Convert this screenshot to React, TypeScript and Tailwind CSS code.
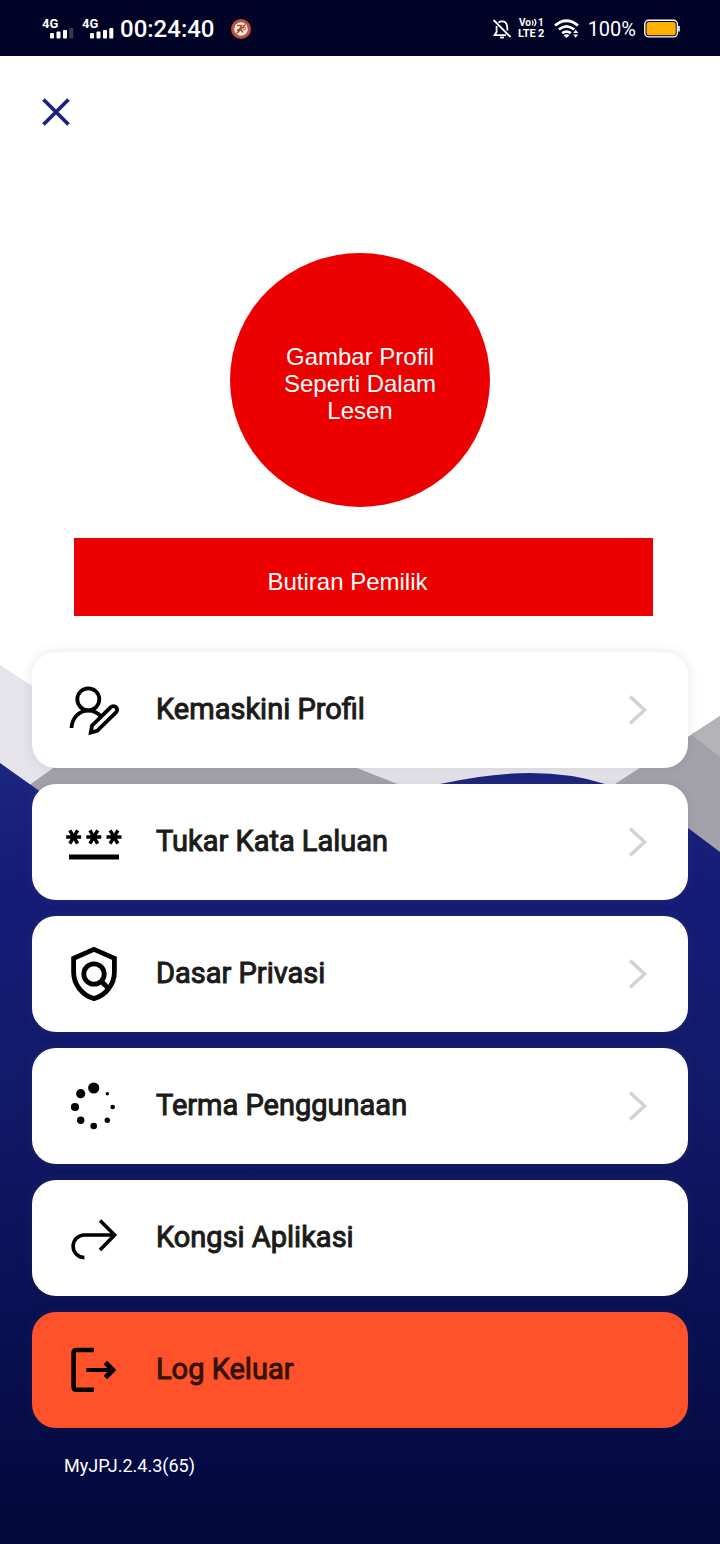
import React from 'react';

interface MenuItem {
  label: string;
  icon: React.ReactNode;
  chevron?: boolean;
  danger?: boolean;
}

const iconClass = 'w-14 h-14 shrink-0';

const ProfileIcon = () => (
  <svg viewBox="0 0 56 56" className={iconClass} fill="none" stroke="currentColor" strokeWidth="3.8" aria-hidden="true">
    <circle cx="22.3" cy="17.3" r="11" />
    <path d="M5.5 46C6 36 13 28.6 22.3 28.6C28 28.6 32 30.8 35.5 35" />
    <path d="M24.8 50.6L26 43.6L44.8 25.2A3.6 3.6 0 0 1 50 30.4L31.2 48.8Z" strokeLinejoin="miter" />
  </svg>
);

const PasswordIcon = () => (
  <svg viewBox="0 0 56 56" className={iconClass} fill="none" stroke="currentColor" strokeWidth="3.5" aria-hidden="true">
    {[7.7, 27.8, 48].map((x) => (
      <g key={x} transform={`translate(${x} 23)`}>
        <path d="M-7.5 0H7.5M-3.9 -6.6L3.9 6.6M3.9 -6.6L-3.9 6.6" />
      </g>
    ))}
    <path d="M3 43H53" strokeWidth="5" />
  </svg>
);

const PrivacyIcon = () => (
  <svg viewBox="0 0 56 56" className={iconClass} fill="none" stroke="currentColor" strokeWidth="4.8" aria-hidden="true">
    <path d="M28 3.4L48.4 12.3V26C48.4 38.4 39.8 49.4 28 52.6C16.2 49.4 7.6 38.4 7.6 26V12.3Z" />
    <circle cx="28" cy="28" r="10.2" />
    <path d="M34.5 34.5L43 43" />
  </svg>
);

const dots = [
  [27.7, 10, 5.6],
  [14.7, 15.7, 4.6],
  [9, 29, 4.1],
  [14.7, 42.3, 3.7],
  [27.7, 48, 3.3],
  [41.3, 42.3, 2.7],
  [46.7, 29, 2.3],
  [41.3, 15.7, 1.7],
];

const TermsIcon = () => (
  <svg viewBox="0 0 56 56" className={iconClass} fill="currentColor" aria-hidden="true">
    {dots.map(([cx, cy, r]) => (
      <circle key={`${cx}-${cy}`} cx={cx} cy={cy} r={r} />
    ))}
  </svg>
);

const ShareIcon = () => (
  <svg viewBox="0 0 56 56" className={iconClass} fill="none" stroke="currentColor" strokeWidth="3.6" aria-hidden="true">
    <path d="M18.4 47.6A11.3 11.3 0 0 1 18.4 25H48" />
    <path d="M34 10.5L48.6 25L34 40" />
  </svg>
);

const LogoutIcon = () => (
  <svg viewBox="0 0 56 56" className={iconClass} fill="none" stroke="currentColor" strokeWidth="4.6" aria-hidden="true">
    <path d="M28 8H10.5Q7.6 8 7.6 11V44.7Q7.6 47.7 10.5 47.7H28" />
    <path d="M20.3 28H46" strokeWidth="4" />
    <path d="M39.4 20.6L46.8 28L39.4 35.4" strokeWidth="5" />
  </svg>
);

const menuItems: MenuItem[] = [
  { label: 'Kemaskini Profil', icon: <ProfileIcon />, chevron: true },
  { label: 'Tukar Kata Laluan', icon: <PasswordIcon />, chevron: true },
  { label: 'Dasar Privasi', icon: <PrivacyIcon />, chevron: true },
  { label: 'Terma Penggunaan', icon: <TermsIcon />, chevron: true },
  { label: 'Kongsi Aplikasi', icon: <ShareIcon /> },
  { label: 'Log Keluar', icon: <LogoutIcon />, danger: true },
];

const Signal: React.FC<{ weak?: boolean }> = ({ weak }) => (
  <svg viewBox="0 0 32 24" className="w-8 h-6" fill="currentColor" aria-hidden="true">
    <text x="0" y="11" fontSize="13" fontWeight="700">4G</text>
    <rect x="8" y="16" width="4" height="5.5" rx="1" />
    <rect x="14.5" y="14.5" width="4" height="7" rx="1" />
    <rect x="21" y="13" width="4" height="8.5" rx="1" />
    <rect x="27.3" y="11" width="4" height="10.5" rx="1" opacity={weak ? 0.22 : 1} />
  </svg>
);

const StatusBar = () => (
  <header className="flex h-14 items-center justify-between bg-[#000226] pl-[42px] pr-10 pt-0.5 text-white">
    <div className="flex items-center">
      <Signal weak />
      <span className="w-2" />
      <Signal />
      <time className="ml-1.5 text-2xl font-medium">00:24:40</time>
      <svg viewBox="0 0 20 20" className="ml-4 h-5 w-5" fill="none" aria-hidden="true">
        <circle cx="10" cy="10" r="10" fill="#bd4f40" />
        <circle cx="10" cy="10" r="6.8" fill="#fff0de" />
        <path d="M5.5 14.5L14.5 5.5M6 6.5H10.5L9 9.5L12 13.5M6 11.5L9 10" stroke="#a64a35" strokeWidth="1.5" />
        <circle cx="13.4" cy="9.6" r="1.4" stroke="#a64a35" />
      </svg>
    </div>
    <div className="flex items-center">
      <svg viewBox="0 0 20 20" className="h-5 w-5" fill="none" stroke="currentColor" strokeWidth="1.8" aria-hidden="true">
        <path d="M1.5 1L18.5 18" />
        <path d="M6.5 3.6C8 2 12 2 13.6 3.6C15.2 5.2 15.4 7 15.4 11.5" />
        <path d="M4.6 7V13L2.6 16.2H14" />
        <path d="M8 18.5H12" />
      </svg>
      <svg viewBox="0 0 28 28" className="ml-1.5 h-7 w-7" fill="currentColor" aria-hidden="true">
        <text x="1" y="11" fontSize="10" fontWeight="700">Vo</text>
        <path d="M14 5.5Q16 7.5 14 10.5M16.3 4Q19.4 7.5 16.3 11" fill="none" stroke="currentColor" strokeWidth="1.3" />
        <text x="20" y="11" fontSize="10" fontWeight="700">1</text>
        <text x="0" y="22" fontSize="11" fontWeight="700">LTE</text>
        <text x="20" y="22" fontSize="11" fontWeight="700">2</text>
      </svg>
      <svg viewBox="0 0 26 20" className="ml-2 h-5 w-[26px]" fill="none" stroke="currentColor" strokeWidth="2.8" aria-hidden="true">
        <path d="M1 6.5Q12.5 -3 24 6.5" />
        <path d="M4.8 10.5Q12.5 4.2 20.2 10.5" />
        <path d="M8.2 14.2Q12.5 11 16.8 14.2" />
        <path d="M9.5 16.2Q12.5 14.5 15.5 16.2L12.5 19Z" fill="currentColor" stroke="none" />
        <path d="M19.2 14L21.7 10.8L24.2 14ZM19.2 15.6L21.7 18.8L24.2 15.6Z" fill="currentColor" stroke="none" />
      </svg>
      <span className="ml-2 text-xl">100%</span>
      <svg viewBox="0 0 36 20" className="ml-2 h-5 w-9" fill="none" aria-hidden="true">
        <rect x="0.8" y="1.3" width="32.6" height="16.6" rx="4" stroke="#fff" strokeWidth="1.4" />
        <rect x="2.5" y="3" width="29.2" height="13.2" rx="2.5" fill="#ffb000" />
        <path d="M35 7V12.5" stroke="#fff" strokeWidth="1.6" />
      </svg>
    </div>
  </header>
);

const Backdrop = () => (
  <svg
    viewBox="0 56 720 1488"
    preserveAspectRatio="none"
    className="absolute inset-0 h-full w-full"
    aria-hidden="true"
  >
    <defs>
      <linearGradient id="navy" x1="0" y1="763" x2="0" y2="1544" gradientUnits="userSpaceOnUse">
        <stop offset="0" stopColor="#1b2680" />
        <stop offset="0.15" stopColor="#151c78" />
        <stop offset="0.4" stopColor="#121a6c" />
        <stop offset="0.65" stopColor="#0b1257" />
        <stop offset="0.87" stopColor="#050c46" />
        <stop offset="1" stopColor="#020839" />
      </linearGradient>
    </defs>
    <path d="M0 665L60 704L600 720L650 760V900H0Z" fill="#e6e4eb" />
    <path d="M28 786L70 756Q200 730 357 768L405 787V900H28Z" fill="#a3a1a9" />
    <path d="M720 716L615 784V900H720Z" fill="#a3a1a9" />
    <path d="M720 716L692 735L720 757Z" fill="#b5b3b8" />
    <path d="M0 763L38 790L140 850H380L440 784Q538 762 605 784L688 828L720 852V1544H0Z" fill="url(#navy)" />
  </svg>
);

const MenuButton: React.FC<{ item: MenuItem }> = ({ item }) => (
  <button
    type="button"
    className={`flex h-[116px] w-full items-center gap-[34px] rounded-3xl pl-[34px] pr-[38px] text-left text-black shadow-[0_0_12px_rgba(90,90,90,0.15)] ${
      item.danger ? 'bg-[#ff522b]' : 'bg-white'
    }`}
  >
    {item.icon}
    <span
      className={`flex-1 text-[29px] [-webkit-text-stroke:1px] ${item.danger ? 'text-[#34130b]' : 'text-[#1c1b1a]'}`}
    >
      {item.label}
    </span>
    {item.chevron && (
      <svg viewBox="0 0 24 32" className="h-8 w-6" fill="none" stroke="#d2d2d2" strokeWidth="3.6" aria-hidden="true">
        <path d="M4 2.5L18.5 16L4 29.5" />
      </svg>
    )}
  </button>
);

const App: React.FC = () => {
  return (
    <div className="flex min-h-screen flex-col bg-white font-[Roboto,sans-serif]">
      <StatusBar />

      <main className="relative flex-1">
        <Backdrop />

        <div className="relative px-8 pb-16 pt-[42px]">
          <button type="button" aria-label="Tutup" className="ml-2.5 block text-[#1a237e]">
            <svg viewBox="0 0 28 28" className="h-7 w-7" fill="none" stroke="currentColor" strokeWidth="3.8">
              <path d="M1.5 1.5L26.5 26.5M26.5 1.5L1.5 26.5" />
            </svg>
          </button>

          {/* Profile */}
          <section className="mt-[127px] font-['Liberation_Sans',Arial,sans-serif] text-2xl text-white">
            <div className="mx-auto flex h-[254px] w-[260px] items-center justify-center rounded-[50%] bg-[#ed0000] pt-1.5">
              <p className="w-40 text-center leading-[27px]">Gambar Profil Seperti Dalam Lesen</p>
            </div>
            <div className="ml-[42px] mr-[35px] mt-[31px] flex h-[78px] items-center justify-center bg-[#ed0000] pr-8 pt-2.5">
              <p>Butiran Pemilik</p>
            </div>
          </section>

          {/* Menu */}
          <nav className="mt-9 flex flex-col gap-4">
            {menuItems.map((item) => (
              <MenuButton key={item.label} item={item} />
            ))}
          </nav>

          <p className="ml-8 mt-6 text-lg text-white">MyJPJ.2.4.3(65)</p>
        </div>
      </main>
    </div>
  );
};

export default App;
